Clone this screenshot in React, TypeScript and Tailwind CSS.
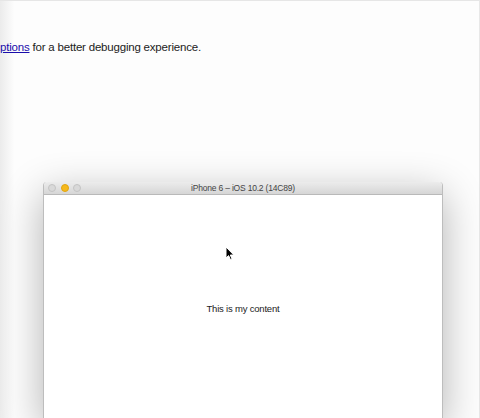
import React from 'react';

const TrafficLight: React.FC<{ tone: 'idle' | 'min' }> = ({ tone }) => (
  <span
    className={`block w-[8px] h-[8px] rounded-full border ${
      tone === 'min' ? 'bg-[#f6b91c] border-[#e0a512]' : 'bg-[#d9d9d9] border-[#c4c4c4]'
    }`}
  />
);

const Pointer: React.FC = () => (
  <svg width="10" height="15" viewBox="0 0 10 15" className="absolute left-[225px] top-[246px]">
    <path d="M1 1 L1 12 L3.6 9.6 L5.4 13.6 L7 12.9 L5.3 9 L8.8 9 Z" fill="#000" stroke="#fff" strokeWidth="1" strokeLinejoin="round" />
  </svg>
);

export default function App() {
  return (
    <div className="relative w-[480px] h-[418px] overflow-hidden bg-[#fdfdfd] font-['Liberation_Sans',Arial,sans-serif]">
      {/* page behind the simulator */}
      <div className="h-full border-t border-[#e6e6e6] border-r border-r-[#e8e8e8] bg-gradient-to-r from-[#ebebeb] via-[#fdfdfd] via-[3%] to-[#fdfdfd] flex flex-col">
        <p className="mt-[39px] text-[11.5px] leading-[14px] tracking-[-0.2px] text-[#222] whitespace-nowrap">
          <a className="text-[#1a0dab] underline">ptions</a> for a better debugging experience.
        </p>

        {/* simulator window */}
        <div className="mt-[128px] ml-[43px] w-[400px] flex-1 flex flex-col bg-white border-x border-[#bdbdbd] rounded-t-[4px] shadow-[0_12px_40px_rgba(0,0,0,0.3)]">
          <div className="relative h-[13px] flex items-center px-[4px] gap-[4.5px] rounded-t-[4px] bg-gradient-to-b from-[#ececec] to-[#d6d6d6] border-b border-[#b9b9b9]">
            <TrafficLight tone="idle" />
            <TrafficLight tone="min" />
            <TrafficLight tone="idle" />
            <span className="absolute inset-0 flex items-center justify-center text-[8.5px] tracking-[-0.2px] text-[#444]">
              iPhone 6 – iOS 10.2 (14C89)
            </span>
          </div>
          <div className="flex-1 flex flex-col items-center pt-[107px]">
            <span className="text-[9.5px] tracking-[-0.2px] text-[#222]">This is my content</span>
          </div>
        </div>
      </div>
      <Pointer />
    </div>
  );
}
